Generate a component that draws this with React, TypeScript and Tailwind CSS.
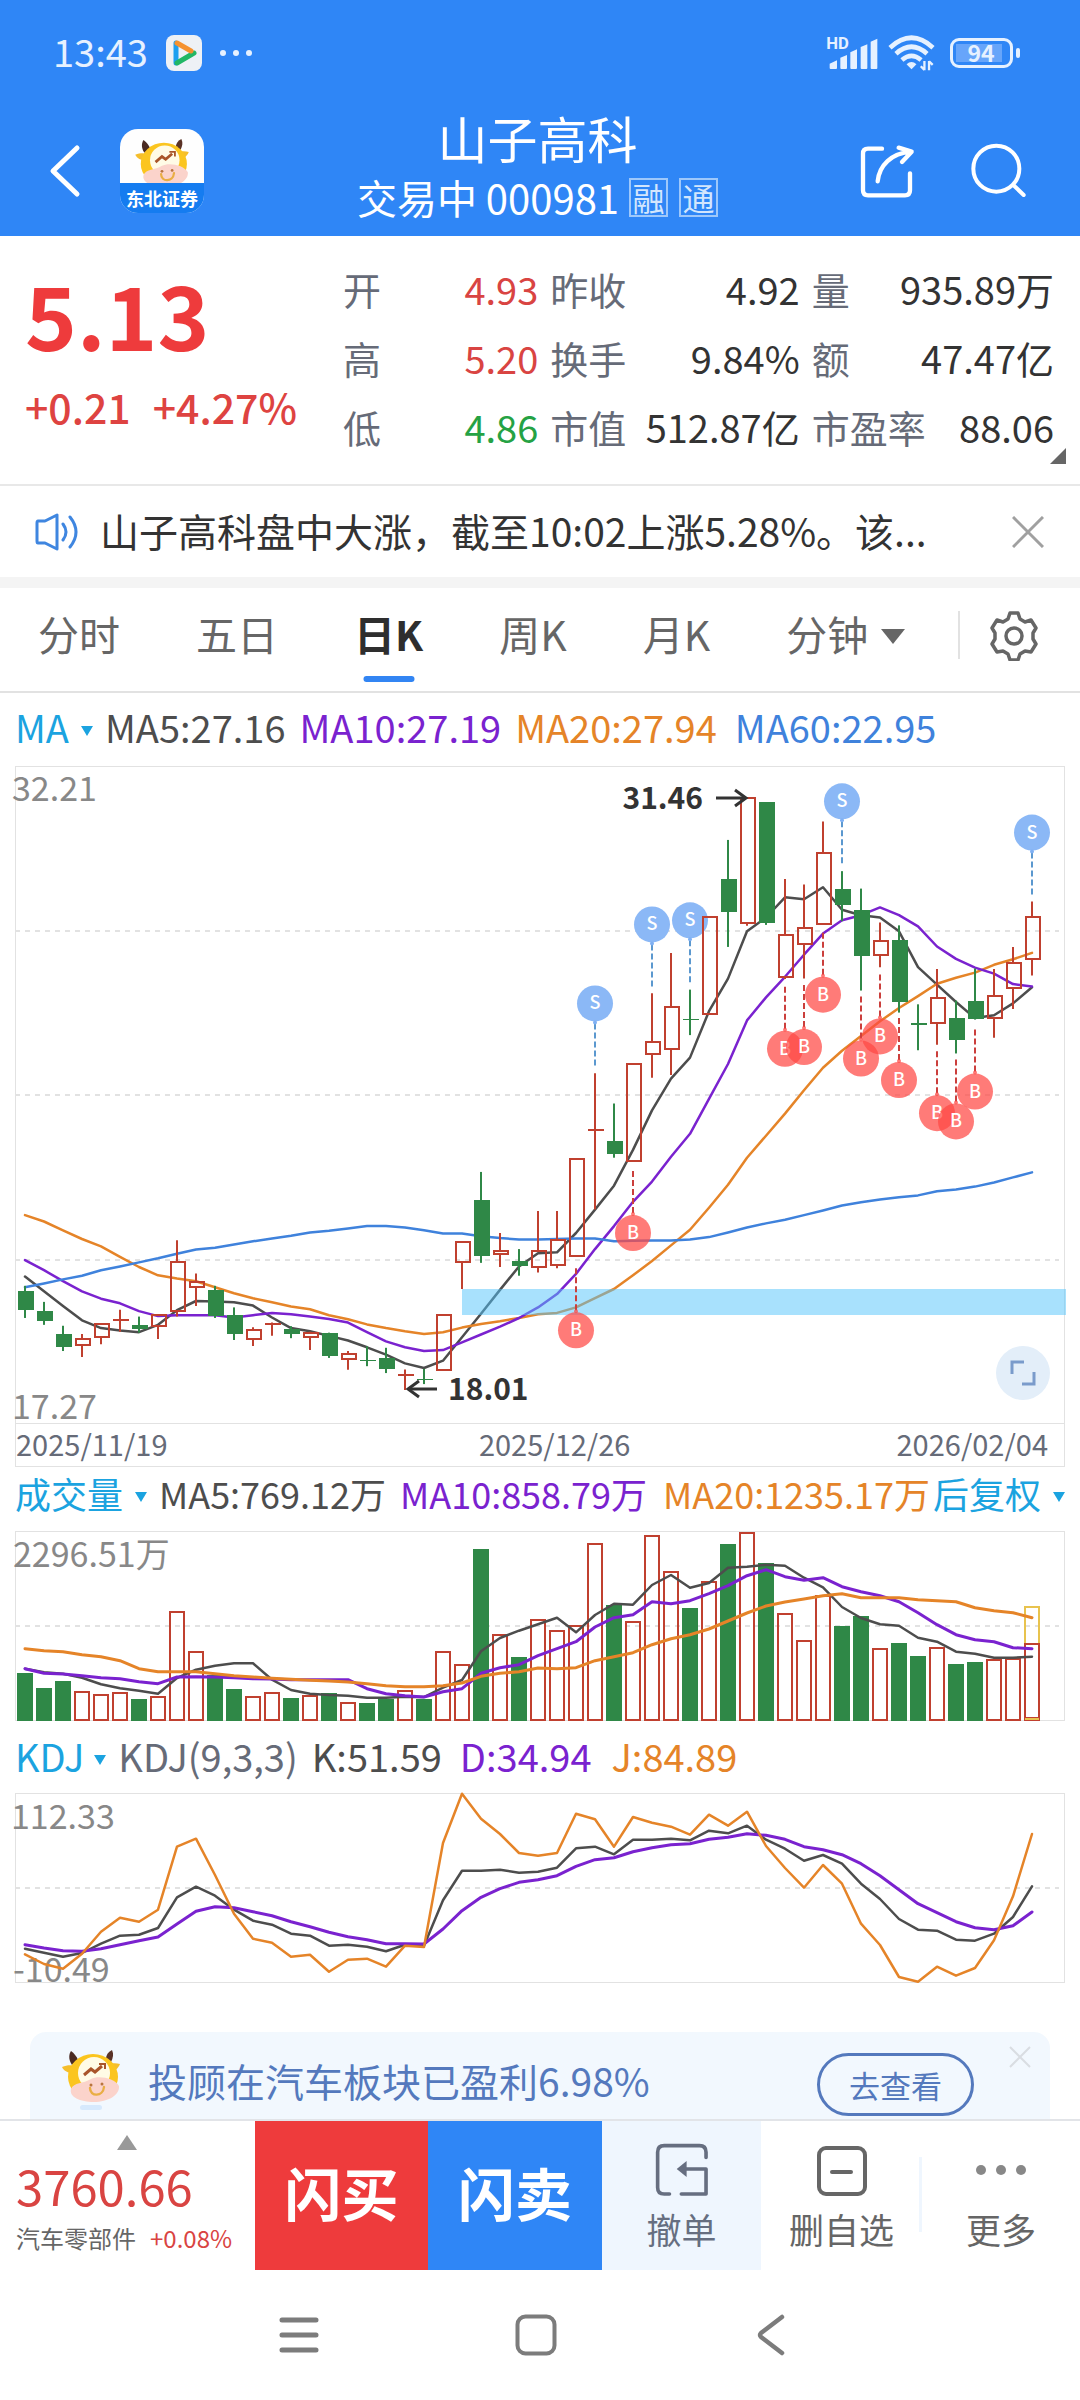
import React from "react";

const GREEN = "#2f8847";
const RED = "#c0402f";
const DARK = "#4d4d4d";
const PURPLE = "#7a22cf";
const ORANGE = "#e58428";
const BLUE = "#3f82dc";

const STEP = 19;
const FIRST = 10;
const cx = (i: number) => FIRST + STEP * i;

type Scale = (v: number) => number;
const priceY: Scale = (v) => (v - 36) * 0.4592;
const volumeY: Scale = (v) => (v - 214) / 3;
const kdjY: Scale = (v) => (v - 190) / 3;

/* side, body top, body bottom, high, low */
type Candle = ["r" | "g", number, number, number, number];
const candles: Candle[] = [
  ["g", 1179, 1221, 1168, 1238], ["g", 1222, 1245, 1203, 1253], ["g", 1274, 1301, 1255, 1310],
  ["r", 1284, 1296, 1273, 1323], ["r", 1251, 1280, 1251, 1295], ["r", 1241, 1242, 1220, 1268],
  ["g", 1254, 1262, 1235, 1270], ["r", 1231, 1256, 1231, 1284], ["r", 1116, 1222, 1069, 1235],
  ["r", 1159, 1171, 1141, 1212], ["g", 1178, 1233, 1168, 1238], ["g", 1231, 1273, 1215, 1286],
  ["r", 1264, 1284, 1258, 1299], ["r", 1249, 1250, 1248, 1277], ["g", 1262, 1273, 1256, 1282],
  ["r", 1270, 1280, 1268, 1308], ["g", 1270, 1321, 1270, 1325], ["r", 1316, 1328, 1310, 1351],
  ["g", 1329, 1332, 1300, 1343], ["g", 1326, 1349, 1303, 1358], ["r", 1360, 1361, 1350, 1395],
  ["g", 1370, 1374, 1349, 1382], ["r", 1231, 1351, 1231, 1351], ["r", 1072, 1116, 1072, 1175],
  ["g", 982, 1102, 920, 1118], ["r", 1092, 1099, 1053, 1127], ["g", 1115, 1125, 1088, 1146],
  ["r", 1093, 1127, 1005, 1139], ["r", 1068, 1123, 1005, 1130], ["r", 892, 1103, 892, 1103],
  ["r", 827, 828, 705, 1002], ["g", 852, 880, 771, 889], ["r", 685, 896, 685, 896],
  ["r", 637, 663, 531, 715], ["r", 561, 653, 443, 709], ["g", 587, 590, 523, 622],
  ["r", 365, 576, 365, 576], ["g", 283, 354, 197, 430], ["r", 105, 377, 105, 384],
  ["g", 115, 378, 115, 382], ["r", 404, 496, 282, 500], ["r", 388, 423, 294, 499],
  ["r", 225, 380, 157, 380], ["g", 303, 339, 265, 374], ["g", 349, 450, 303, 525],
  ["r", 417, 448, 377, 474], ["g", 416, 550, 383, 573], ["g", 596, 599, 555, 655],
  ["r", 541, 596, 478, 643], ["g", 584, 632, 547, 662], ["g", 547, 588, 477, 588],
  ["r", 537, 585, 478, 628], ["r", 465, 519, 430, 565], ["r", 365, 456, 331, 492],
];

const ma5 = [1148, 1180, 1212, 1243, 1260, 1265, 1269, 1253, 1221, 1201, 1202, 1204, 1211, 1237, 1260, 1267, 1277, 1287, 1302, 1318, 1337, 1347, 1331, 1280, 1229, 1177, 1126, 1097, 1095, 1053, 1002, 950, 872, 786, 717, 671, 570, 499, 396, 366, 322, 326, 300, 349, 361, 366, 396, 474, 512, 550, 585, 579, 553, 518];
const ma10 = [1112, 1134, 1158, 1180, 1196, 1206, 1223, 1234, 1232, 1232, 1232, 1237, 1232, 1227, 1230, 1235, 1240, 1248, 1269, 1289, 1302, 1310, 1308, 1291, 1274, 1257, 1238, 1215, 1186, 1142, 1088, 1038, 985, 941, 887, 837, 761, 685, 590, 540, 495, 447, 401, 372, 361, 344, 361, 385, 429, 456, 475, 488, 511, 516];
const ma20 = [1014, 1028, 1047, 1066, 1082, 1105, 1127, 1145, 1152, 1158, 1171, 1184, 1195, 1204, 1213, 1219, 1232, 1241, 1252, 1260, 1267, 1273, 1269, 1259, 1251, 1245, 1238, 1230, 1227, 1215, 1195, 1175, 1145, 1114, 1080, 1046, 998, 948, 889, 841, 793, 742, 693, 656, 624, 592, 563, 537, 510, 497, 486, 469, 457, 443];
const ma60 = [1171, 1163, 1154, 1146, 1134, 1126, 1117, 1108, 1098, 1089, 1085, 1078, 1071, 1065, 1059, 1052, 1048, 1043, 1038, 1038, 1041, 1047, 1054, 1054, 1060, 1064, 1067, 1067, 1066, 1065, 1065, 1071, 1070, 1069, 1069, 1067, 1062, 1052, 1041, 1032, 1024, 1014, 1004, 993, 986, 980, 975, 971, 962, 958, 952, 943, 932, 921];

const sells: [number, number][] = [[30, 553], [33, 381], [35, 372], [43, 113], [53, 181]];
const buys: [number, number][] = [[29, 1265], [32, 1053], [40, 652], [41, 648], [42, 534], [44, 673], [45, 625], [46, 720], [48, 792], [49, 810], [50, 745]];

const volumes = [639, 684, 663, 694, 703, 698, 717, 709, 454, 574, 645, 687, 709, 698, 714, 706, 700, 727, 729, 717, 691, 717, 574, 613, 267, 523, 591, 478, 511, 496, 250, 436, 484, 226, 334, 444, 364, 252, 216, 309, 460, 541, 406, 498, 468, 565, 549, 588, 562, 612, 606, 598, 595, 550];
const vol5 = [627, 638, 642, 654, 674, 686, 693, 702, 655, 630, 618, 611, 611, 660, 691, 702, 706, 708, 714, 714, 711, 712, 684, 661, 575, 535, 513, 494, 474, 518, 466, 432, 435, 376, 346, 384, 370, 324, 321, 315, 318, 354, 383, 442, 475, 494, 498, 534, 546, 576, 582, 594, 594, 591];
const vol10 = [627, 641, 643, 648, 654, 657, 666, 672, 652, 651, 652, 654, 657, 658, 660, 660, 660, 660, 687, 702, 708, 712, 696, 687, 641, 624, 615, 588, 567, 546, 502, 474, 465, 426, 432, 423, 402, 378, 348, 330, 351, 362, 354, 381, 396, 408, 426, 459, 495, 525, 540, 546, 564, 567];
const vol20 = [567, 573, 576, 585, 591, 603, 627, 636, 636, 636, 642, 648, 652, 656, 659, 662, 664, 667, 672, 678, 681, 681, 678, 670, 650, 641, 636, 625, 627, 624, 603, 591, 579, 555, 537, 525, 508, 484, 460, 439, 427, 418, 408, 402, 414, 414, 414, 420, 423, 426, 444, 453, 459, 474];

const kLine = [657, 669, 681, 670, 642, 618, 615, 595, 503, 471, 498, 540, 573, 585, 612, 618, 648, 645, 651, 665, 645, 648, 512, 423, 423, 420, 429, 426, 414, 356, 351, 374, 330, 330, 327, 332, 303, 311, 288, 330, 357, 393, 376, 402, 462, 508, 568, 600, 603, 630, 633, 612, 562, 470];
const dLine = [645, 655, 663, 665, 657, 645, 633, 622, 583, 545, 531, 534, 546, 558, 576, 591, 608, 621, 630, 642, 642, 643, 598, 543, 503, 477, 458, 450, 438, 410, 390, 384, 366, 354, 345, 342, 329, 323, 312, 317, 329, 351, 360, 375, 402, 438, 480, 522, 549, 576, 594, 600, 588, 547];
const jLine = [674, 703, 717, 672, 606, 564, 576, 540, 351, 327, 436, 552, 627, 639, 681, 675, 726, 690, 687, 711, 648, 652, 340, 192, 267, 313, 370, 378, 370, 252, 269, 351, 262, 279, 291, 315, 255, 288, 246, 349, 415, 474, 406, 462, 582, 646, 742, 756, 711, 738, 715, 632, 500, 313];

function Line({ data, y, color, width = 2.5 }: { data: number[]; y: Scale; color: string; width?: number }) {
  return (
    <polyline
      points={data.map((v, i) => `${cx(i)},${y(v).toFixed(1)}`).join(" ")}
      fill="none"
      stroke={color}
      strokeWidth={width}
      strokeLinejoin="round"
      strokeLinecap="round"
    />
  );
}

function Frame({ height, lines }: { height: number; lines: number }) {
  return (
    <g fill="none" stroke="#e2e2e2">
      <rect x="0.5" y="0.5" width="1049" height={height - 1} />
      {Array.from({ length: lines }, (_, n) => {
        const y = Math.round((height * (n + 1)) / (lines + 1));
        return <line key={n} x1="0" x2="1044" y1={y} y2={y} strokeWidth="2" strokeDasharray="5 5" />;
      })}
    </g>
  );
}

function PriceChart() {
  return (
    <svg viewBox="0 0 1050 658" className="block w-full overflow-visible" role="img" aria-label="日K线图">
      <Frame height={658} lines={3} />
      <Line data={ma5} y={priceY} color={DARK} />
      <Line data={ma20} y={priceY} color={ORANGE} />
      <Line data={ma10} y={priceY} color={PURPLE} />
      <Line data={ma60} y={priceY} color={BLUE} />
      <rect x="447" y="523" width="604" height="26" fill="#51c3fb" opacity="0.5" />
      {buys.map(([i, v]) => {
        const y = priceY(v);
        return (
          <g key={i}>
            <line x1={cx(i)} x2={cx(i)} y1={y - 62} y2={y - 20} stroke="#cb3f3c" strokeWidth="2" strokeDasharray="6 3" />
            <circle cx={cx(i)} cy={y} r="18" fill="#ff4844" opacity="0.72" />
            <circle cx={cx(i)} cy={y - 19} r="2" fill="#ff4844" opacity="0.72" />
            <text x={cx(i)} y={y + 6} textAnchor="middle" fontSize="18" fontWeight="500" fill="#fff">B</text>
          </g>
        );
      })}
      {sells.map(([i, v]) => {
        const y = priceY(v);
        return (
          <g key={i}>
            <line x1={cx(i)} x2={cx(i)} y1={y + 20} y2={y + 63} stroke="#5b98cf" strokeWidth="2" strokeDasharray="6 3" />
            <circle cx={cx(i)} cy={y} r="18" fill="#8bb8f6" />
            <circle cx={cx(i)} cy={y + 19} r="2" fill="#7fb0f3" />
            <text x={cx(i)} y={y + 6} textAnchor="middle" fontSize="18" fontWeight="500" fill="#fff">S</text>
          </g>
        );
      })}
      {candles.map(([side, top, bottom, high, low], i) => {
        const x = cx(i);
        const t = Math.round(priceY(top));
        const b = Math.round(priceY(bottom));
        const h = Math.max(b - t, 1);
        if (side === "g") {
          return (
            <g key={i} fill={GREEN}>
              <rect x={x - 1} y={priceY(high)} width="2" height={priceY(low) - priceY(high)} />
              <rect x={x - 7} y={t} width="16" height={h} />
            </g>
          );
        }
        return (
          <g key={i}>
            <line x1={x} x2={x} y1={priceY(high)} y2={t} stroke={RED} strokeWidth="2" />
            <line x1={x} x2={x} y1={b} y2={priceY(low)} stroke={RED} strokeWidth="2" />
            {h <= 2 ? (
              <rect x={x - 7} y={t} width="16" height="2" fill={RED} />
            ) : (
              <rect x={x - 6} y={t} width="14" height={h} fill="none" stroke={RED} strokeWidth="2" />
            )}
          </g>
        );
      })}
      <g fill="none" stroke="#333" strokeWidth="3">
        <path d="M701 32H730" />
        <path d="M720 24L731 32L720 40" />
        <path d="M422 623H394" />
        <path d="M404 615L393 623L404 631" />
      </g>
      <g fontSize="30" fontWeight="700" fill="#333">
        <text x="688" y="43" textAnchor="end">31.46</text>
        <text x="433" y="634">18.01</text>
      </g>
      <g fontSize="34" fill="#888">
        <text x="-3" y="35">32.21</text>
        <text x="-3" y="653">17.27</text>
      </g>
    </svg>
  );
}

function VolumeChart() {
  return (
    <svg viewBox="0 0 1050 190" className="block w-full overflow-visible" role="img" aria-label="成交量图">
      <Frame height={190} lines={1} />
      <text x="-2" y="36" fontSize="34" fill="#888">2296.51万</text>
      {volumes.map((v, i) => {
        const y = Math.round(volumeY(v));
        return candles[i][0] === "g" ? (
          <rect key={i} x={cx(i) - 8} y={y} width="16" height={190 - y} fill={GREEN} />
        ) : (
          <rect key={i} x={cx(i) - 7} y={y + 1} width="14" height={188 - y} fill="none" stroke={RED} strokeWidth="2" />
        );
      })}
      <rect x={cx(53) - 7} y="113" width="14" height="74" fill="none" stroke={RED} strokeWidth="2" />
      <path d={`M${cx(53) - 7} 112V76h14V112M${cx(53) - 7} 188h14`} fill="none" stroke="#e8c34e" strokeWidth="2" />
      <Line data={vol5} y={volumeY} color={DARK} />
      <Line data={vol10} y={volumeY} color={PURPLE} width={3} />
      <Line data={vol20} y={volumeY} color={ORANGE} width={3} />
    </svg>
  );
}

function KdjChart() {
  return (
    <svg viewBox="0 0 1050 190" className="block w-full overflow-visible" role="img" aria-label="KDJ图">
      <Frame height={190} lines={1} />
      <g fontSize="34" fill="#888">
        <text x="-4" y="36">112.33</text>
        <text x="-2" y="189">-10.49</text>
      </g>
      <Line data={kLine} y={kdjY} color={DARK} />
      <Line data={dLine} y={kdjY} color={PURPLE} width={3} />
      <Line data={jLine} y={kdjY} color={ORANGE} />
    </svg>
  );
}

function Cow({ className }: { className: string }) {
  return (
    <svg viewBox="0 0 60 52" className={className} aria-hidden="true">
      <path d="M11 15C7 9 8 4 10 1c3 2 6 6 7 9z" fill="#4a2a22" />
      <path d="M45 9c0-4 2-7 6-9c2 4 1 8-1 12z" fill="#5a3226" />
      <path d="M1 17c5-2 9-2 13-1l-2 7C7 23 3 21 1 17z" fill="#f5be2c" />
      <path d="M59 14c-4-1-9-1-13 1l2 7c5 0 9-3 11-8z" fill="#f5be2c" />
      <ellipse cx="32" cy="27" rx="25" ry="23" fill="#fbc51f" />
      <circle cx="33" cy="23" r="16" fill="#fffbe6" />
      <path d="M10 39C13 32 22 34 30 29c7-4 24-1 28 7c1 9-11 16-25 16S8 47 10 39z" fill="#fbd3cb" />
      <path d="M23 25l7-6l4 3l7-6" fill="none" stroke="#a9552a" strokeWidth="3" />
      <path d="M38 14h6v5" fill="none" stroke="#a9552a" strokeWidth="2" />
      <circle cx="30" cy="35" r="1.5" fill="#b9743f" />
      <circle cx="41" cy="34" r="1.5" fill="#b9743f" />
      <path d="M29 38c0 9 13 9 14-1" fill="none" stroke="#e9ae44" strokeWidth="2.4" strokeLinecap="round" />
    </svg>
  );
}

function Caret() {
  return (
    <svg viewBox="0 0 12 10" className="mt-[8px] h-[10px] w-[12px] shrink-0" aria-hidden="true">
      <path d="M0 0h12L6 10z" fill="#1ba3e0" />
    </svg>
  );
}

function StatusBar() {
  return (
    <div className="flex h-[106px] items-center pr-[60px] pl-[53px] text-[#e6f1ff]">
      <span className="pb-[4px] text-[38px] leading-none">13:43</span>
      <svg viewBox="0 0 36 36" className="ml-[18px] size-[36px]" aria-hidden="true">
        <rect width="36" height="36" rx="8" fill="#eef1f5" />
        <path d="M10 8v20" stroke="#1c9ff0" strokeWidth="5" strokeLinecap="round" />
        <path d="M11 28L28 18" stroke="#22b765" strokeWidth="5" strokeLinecap="round" />
        <path d="M11 8L25 16" stroke="#f5922f" strokeWidth="5" strokeLinecap="round" />
      </svg>
      <svg viewBox="0 0 32 6" className="ml-[18px] h-[6px] w-[32px]" fill="#e6f1ff" aria-hidden="true">
        <circle cx="3" cy="3" r="3" />
        <circle cx="16" cy="3" r="3" />
        <circle cx="29" cy="3" r="3" />
      </svg>
      <svg viewBox="20 45 156 102" className="ml-auto h-[34px] w-[52px] overflow-visible" fill="#e6f1ff" aria-hidden="true">
        <text x="18" y="83" fontSize="50" fontWeight="700" fontFamily="Roboto, sans-serif">HD</text>
        <path d="M28 128l22-10v24q0 2-3 2H31q-3 0-3-3zM60 110l20-8v39q0 3-3 3H63q-3 0-3-3zM90 94l20-9v56q0 3-3 3H93q-3 0-3-3zM121 78l20-8v71q0 3-3 3h-14q-3 0-3-3zM151 62l20-9v88q0 3-3 3h-14q-3 0-3-3z" />
      </svg>
      <svg viewBox="208 44 142 108" className="ml-[9px] h-[36px] w-[47px]" fill="none" stroke="#e6f1ff" strokeWidth="14" aria-hidden="true">
        <path d="M214 82Q279 22 344 82" />
        <path d="M232 100Q279 58 326 100" />
        <path d="M250 119Q279 94 308 119" />
        <path d="M264 132q15-14 30 0L279 147z" fill="#e6f1ff" stroke="none" />
        <path d="M318 122v28M318 149l-11-11M332 150v-28M332 123l11 11" strokeWidth="7" />
      </svg>
      <div className="ml-[15px] flex items-center gap-[3px]">
        <div className="flex h-[30px] w-[63px] items-center rounded-[9px] border-[3px] border-[#e6f1ff] p-[3px]">
          <span className="flex h-[18px] w-[46px] items-center justify-center bg-[#67a5fa] pb-[2px] pl-[4px] text-[23px] leading-none font-bold">94</span>
        </div>
        <div className="h-[10px] w-[4px] rounded-full bg-[#e6f1ff]" />
      </div>
    </div>
  );
}

function Header() {
  return (
    <header className="bg-[#2f86f6] text-white">
      <StatusBar />
      <div className="grid h-[130px] grid-cols-[1fr_auto_1fr] items-center pr-[53px] pl-[48px]">
        <div className="flex items-center gap-[38px]">
          <button type="button" aria-label="返回">
            <svg viewBox="0 0 34 54" className="h-[54px] w-[34px]" fill="none" stroke="white" strokeWidth="5" strokeLinecap="round" strokeLinejoin="round">
              <path d="M29 4L5 27L29 50" />
            </svg>
          </button>
          <div className="relative size-[84px] overflow-hidden rounded-[18px] bg-[#fefefe]">
            <Cow className="mx-auto mt-[10px] h-[48px] w-[56px]" />
            <div className="absolute inset-x-0 bottom-0 flex h-[30px] items-center justify-center bg-[#157cf0] text-[18px] font-bold">东北证券</div>
          </div>
        </div>
        <div className="flex flex-col items-center pb-[8px]">
          <h1 className="text-[50px] leading-[60px]">山子高科</h1>
          <p className="flex items-center text-[40px] leading-[60px]">
            交易中 000981
            <span className="ml-[10px] flex size-[39px] items-center justify-center border-2 border-[#9ec8fb] text-[32px] leading-none text-[#d3e6fd]">融</span>
            <span className="ml-[11px] flex size-[39px] items-center justify-center border-2 border-[#9ec8fb] text-[32px] leading-none text-[#d3e6fd]">通</span>
          </p>
        </div>
        <div className="flex items-center justify-end gap-[56px]">
          <button type="button" aria-label="分享">
            <svg viewBox="122 368 165 165" className="size-[55px]" fill="none" stroke="white" strokeWidth="13" strokeLinecap="round" strokeLinejoin="round">
              <path d="M188 382H146Q131 382 131 397V507Q131 522 146 522H257Q272 522 272 507V456" />
              <path d="M175 480C180 432 215 396 276 391M238 379L277 391L248 422" />
            </svg>
          </button>
          <button type="button" aria-label="搜索">
            <svg viewBox="454 366 168 168" className="size-[56px]" fill="none" stroke="white" strokeWidth="12" strokeLinecap="round">
              <circle cx="530" cy="443" r="69" />
              <path d="M584 495L612 522" />
            </svg>
          </button>
        </div>
      </div>
    </header>
  );
}

const stats: { label: string; value: string; tone: string }[] = [
  { label: "开", value: "4.93", tone: "text-[#d94442]" },
  { label: "昨收", value: "4.92", tone: "text-[#333]" },
  { label: "量", value: "935.89万", tone: "text-[#333]" },
  { label: "高", value: "5.20", tone: "text-[#d94442]" },
  { label: "换手", value: "9.84%", tone: "text-[#333]" },
  { label: "额", value: "47.47亿", tone: "text-[#333]" },
  { label: "低", value: "4.86", tone: "text-[#25a244]" },
  { label: "市值", value: "512.87亿", tone: "text-[#333]" },
  { label: "市盈率", value: "88.06", tone: "text-[#333]" },
];

function Quote() {
  return (
    <section className="relative flex border-b-2 border-[#e8e8e8] pt-[18px] pr-[26px] pb-[23px] pl-[25px]">
      <div className="w-[318px] shrink-0 text-[#ee3b3c]">
        <p className="text-[88px] leading-[118px] font-bold">5.13</p>
        <p className="mt-[2px] flex gap-[22px] text-[41px] leading-[64px] font-medium text-[#de4341]">
          <span>+0.21</span>
          <span>+4.27%</span>
        </p>
      </div>
      <dl className="grid flex-1 grid-cols-[195fr_249fr_242fr] gap-x-[12px] text-[38px] leading-[69px]">
        {stats.map((s) => (
          <div key={s.label} className="flex justify-between whitespace-nowrap">
            <dt className="text-[#666b78]">{s.label}</dt>
            <dd className={s.tone}>{s.value}</dd>
          </div>
        ))}
      </dl>
      <svg viewBox="0 0 16 16" className="absolute right-[14px] bottom-[20px] size-[16px]" aria-hidden="true">
        <path d="M16 0V16H0z" fill="#666" />
      </svg>
    </section>
  );
}

function News() {
  return (
    <section className="flex h-[91px] items-center pr-[36px] pl-[35px]">
      <svg viewBox="0 0 46 38" className="h-[38px] w-[46px] shrink-0" fill="none" stroke="#3f86e0" strokeWidth="3" strokeLinecap="round" strokeLinejoin="round" aria-hidden="true">
        <path d="M3 8h7L22 2v34L10 30H3q-1 0-1-2V10q0-2 1-2z" />
        <path d="M28 11q6 8 0 16M35 4q12 15 0 30" />
      </svg>
      <p className="ml-[19px] flex-1 overflow-hidden pb-[4px] text-[39px] leading-[56px] whitespace-nowrap text-[#333]">山子高科盘中大涨，截至10:02上涨5.28%。该...</p>
      <button type="button" aria-label="关闭">
        <svg viewBox="0 0 32 32" className="size-[32px]" stroke="#a0a0a0" strokeWidth="3">
          <path d="M1 1L31 31M31 1L1 31" />
        </svg>
      </button>
    </section>
  );
}

const tabs = ["分时", "五日", "日K", "周K", "月K"];

function Tabs() {
  return (
    <nav className="flex h-[105px] items-center border-b-2 border-[#e2e2e2] pr-[41px] pl-[38px] text-[41px] text-[#666]">
      <div className="flex h-full items-center gap-[76px]">
        {tabs.map((t) =>
          t === "日K" ? (
            <button key={t} type="button" aria-current="page" className="relative flex h-full items-center pb-[12px] font-bold text-[#2e2e2e]">
              {t}
              <span className="absolute bottom-[9px] left-1/2 h-[6px] w-[51px] -translate-x-1/2 rounded-full bg-[#3285f3]" />
            </button>
          ) : (
            <button key={t} type="button" className="flex h-full items-center pb-[12px]">{t}</button>
          ),
        )}
        <button type="button" className="flex h-full items-center gap-[13px] pb-[12px]">
          分钟
          <svg viewBox="0 0 24 15" className="mt-[6px] h-[15px] w-[24px]" aria-hidden="true">
            <path d="M0 0h24L12 15z" fill="#666" />
          </svg>
        </button>
      </div>
      <div className="mb-[10px] ml-auto h-[48px] w-[2px] bg-[#e2e2e2]" />
      <button type="button" aria-label="设置" className="mb-[8px] ml-[29px]">
        <svg viewBox="0 0 50 50" className="size-[50px]" fill="none" stroke="#666" strokeWidth="3.5" strokeLinejoin="round">
          <path d="M21 2h8l2 6l5 3l6-2l5 8l-3 5v6l3 5l-5 8l-6-1l-5 3l-2 6h-8l-2-6l-5-3l-6 1l-5-8l3-5v-6l-3-5l5-8l6 2l5-3z" />
          <circle cx="25" cy="25" r="8" />
        </svg>
      </button>
    </nav>
  );
}

function Charts() {
  return (
    <section className="px-[15px]">
      <div className="flex h-[73px] items-center pb-[5px] text-[38px] leading-[56px] whitespace-nowrap">
        <button type="button" className="mr-[12px] flex items-center gap-[12px] text-[#1ba3e0]">MA<Caret /></button>
        <span className="mr-[14px] text-[#4d4d4d]">MA5:27.16</span>
        <span className="mr-[14px] text-[#7a22cf]">MA10:27.19</span>
        <span className="mr-[18px] text-[#e58428]">MA20:27.94</span>
        <span className="text-[#3f82dc]">MA60:22.95</span>
      </div>
      <div className="relative">
        <PriceChart />
        <button type="button" aria-label="全屏" className="absolute right-[15px] bottom-[24px] flex size-[54px] items-center justify-center rounded-full bg-[#e3eef9]">
          <svg viewBox="0 0 26 26" className="size-[26px]" fill="none" stroke="#7a9bcb" strokeWidth="3">
            <path d="M2 14V2H14M24 12V24H12" />
          </svg>
        </button>
      </div>
      <div className="grid h-[43px] grid-cols-[471fr_292fr_287fr] items-center border-x border-b border-[#e2e2e2] pr-[16px] pb-[4px] text-[29px] leading-[36px] text-[#666b78]">
        <span>2025/11/19</span>
        <span>2025/12/26</span>
        <span className="text-right">2026/02/04</span>
      </div>
      <div className="flex h-[64px] items-center pb-[12px] text-[36px] leading-[52px] whitespace-nowrap">
        <button type="button" className="mr-[12px] flex items-center gap-[12px] text-[#1ba3e0]">成交量<Caret /></button>
        <span className="mr-[14px] text-[#4d4d4d]">MA5:769.12万</span>
        <span className="mr-[16px] text-[#7a22cf]">MA10:858.79万</span>
        <span className="text-[#e58428]">MA20:1235.17万</span>
        <button type="button" className="ml-auto flex items-center gap-[12px] text-[#1ba3e0]">后复权<Caret /></button>
      </div>
      <VolumeChart />
      <div className="flex h-[72px] items-center pb-[3px] text-[38px] leading-[56px] whitespace-nowrap">
        <button type="button" className="mr-[12px] flex items-center gap-[10px] text-[#1ba3e0]">KDJ<Caret /></button>
        <span className="mr-[14px] text-[#666b78]">KDJ(9,3,3)</span>
        <span className="mr-[18px] text-[#4d4d4d]">K:51.59</span>
        <span className="mr-[20px] text-[#7a22cf]">D:34.94</span>
        <span className="text-[#e58428]">J:84.89</span>
      </div>
      <KdjChart />
    </section>
  );
}

function Banner() {
  return (
    <aside className="relative mx-[30px] mt-[49px] flex h-[87px] items-center rounded-t-[16px] bg-[#f2f8fe] pt-[9px] pr-[76px] pl-[31px]">
      <div className="flex flex-col items-center">
        <Cow className="h-[52px] w-[60px]" />
        <div className="mt-[3px] h-[5px] w-[22px] rounded-full bg-[#d6e9fd]" />
      </div>
      <p className="ml-[27px] text-[39px] leading-[56px] whitespace-nowrap text-[#5479bd]">投顾在汽车板块已盈利6.98%</p>
      <button type="button" className="mt-[9px] ml-auto h-[63px] w-[157px] rounded-full border-[3px] border-[#5479bd] text-[31px] leading-[50px] text-[#5479bd]">去查看</button>
      <button type="button" aria-label="关闭" className="absolute top-[14px] right-[19px]">
        <svg viewBox="0 0 22 22" className="size-[22px]" stroke="#d9dde2" strokeWidth="2">
          <path d="M1 1L21 21M21 1L1 21" />
        </svg>
      </button>
    </aside>
  );
}

function ActionBar() {
  return (
    <div className="grid h-[151px] grid-cols-[255fr_173fr_174fr_159fr_161fr_158fr] border-t-2 border-[#e2e4e8]">
      <button type="button" className="flex flex-col items-start pt-[14px] pl-[16px] whitespace-nowrap">
        <svg viewBox="0 0 20 15" className="ml-[101px] h-[15px] w-[20px]" aria-hidden="true">
          <path d="M10 0L20 15H0z" fill="#999" />
        </svg>
        <span className="text-[49px] leading-[70px] text-[#d94442]">3760.66</span>
        <span className="flex gap-[14px] text-[24px] leading-[36px] text-[#666]">
          汽车零部件<span className="text-[#d94442]">+0.08%</span>
        </span>
      </button>
      <button type="button" className="bg-[#ee3b3c] pb-[8px] text-[57px] font-bold text-white">闪买</button>
      <button type="button" className="bg-[#2f86f6] pb-[8px] text-[57px] font-bold text-white">闪卖</button>
      <button type="button" className="flex flex-col items-center bg-[#eff6fe] pt-[22px] text-[35px] leading-[50px] text-[#666e80]">
        <svg viewBox="160 70 164 164" className="mb-[7px] size-[54px]" fill="none" stroke="#666e80" strokeWidth="11" strokeLinecap="round" strokeLinejoin="round" aria-hidden="true">
          <path d="M315 114V98Q315 78 295 78H188Q168 78 168 98V205Q168 225 188 225H204" />
          <path d="M240 225H315V149H252" />
          <path d="M226 149L256 125V173z" fill="#666e80" stroke="none" />
        </svg>
        撤单
      </button>
      <div className="relative flex">
        <button type="button" className="flex flex-1 flex-col items-center pt-[25px] text-[35px] leading-[50px] text-[#666]">
          <svg viewBox="0 0 50 50" className="mb-[8px] size-[50px]" fill="none" stroke="#666" strokeWidth="4" strokeLinecap="round" aria-hidden="true">
            <rect x="2" y="2" width="46" height="46" rx="7" />
            <path d="M15 26H34" />
          </svg>
          删自选
        </button>
        <div className="absolute top-[36px] right-0 h-[75px] w-[3px] bg-[#eff6fe]" />
      </div>
      <button type="button" className="flex flex-col items-center pt-[44px] text-[35px] leading-[50px] text-[#666]">
        <svg viewBox="0 0 50 10" className="mb-[29px] h-[10px] w-[50px]" fill="#888" aria-hidden="true">
          <circle cx="5" cy="5" r="5" />
          <circle cx="25" cy="5" r="5" />
          <circle cx="45" cy="5" r="5" />
        </svg>
        更多
      </button>
    </div>
  );
}

function SystemNav() {
  return (
    <div className="flex h-[129px] items-center justify-center gap-[196px] pr-[8px] text-[#7c7c7c]">
      <button type="button" aria-label="最近任务">
        <svg viewBox="0 0 40 38" className="h-[38px] w-[40px]" stroke="currentColor" strokeWidth="5" strokeLinecap="round">
          <path d="M3 4H37M3 19H37M3 34H37" />
        </svg>
      </button>
      <button type="button" aria-label="主屏幕">
        <svg viewBox="0 0 42 42" className="size-[42px]" fill="none" stroke="currentColor" strokeWidth="4">
          <rect x="2.5" y="2.5" width="37" height="37" rx="8" />
        </svg>
      </button>
      <button type="button" aria-label="后退">
        <svg viewBox="0 0 40 42" className="h-[42px] w-[40px]" fill="none" stroke="currentColor" strokeWidth="4.5" strokeLinecap="round" strokeLinejoin="round">
          <path d="M29 3L8 19Q6 21 8 23L29 39" />
        </svg>
      </button>
    </div>
  );
}

export default function App() {
  return (
    <div className="min-h-screen bg-white font-['Noto_Sans_CJK_SC',sans-serif]">
      <Header />
      <main>
        <Quote />
        <News />
        <div className="h-[11px] bg-[#f4f4f4]" />
        <Tabs />
        <Charts />
        <Banner />
      </main>
      <footer>
        <ActionBar />
        <SystemNav />
      </footer>
    </div>
  );
}
